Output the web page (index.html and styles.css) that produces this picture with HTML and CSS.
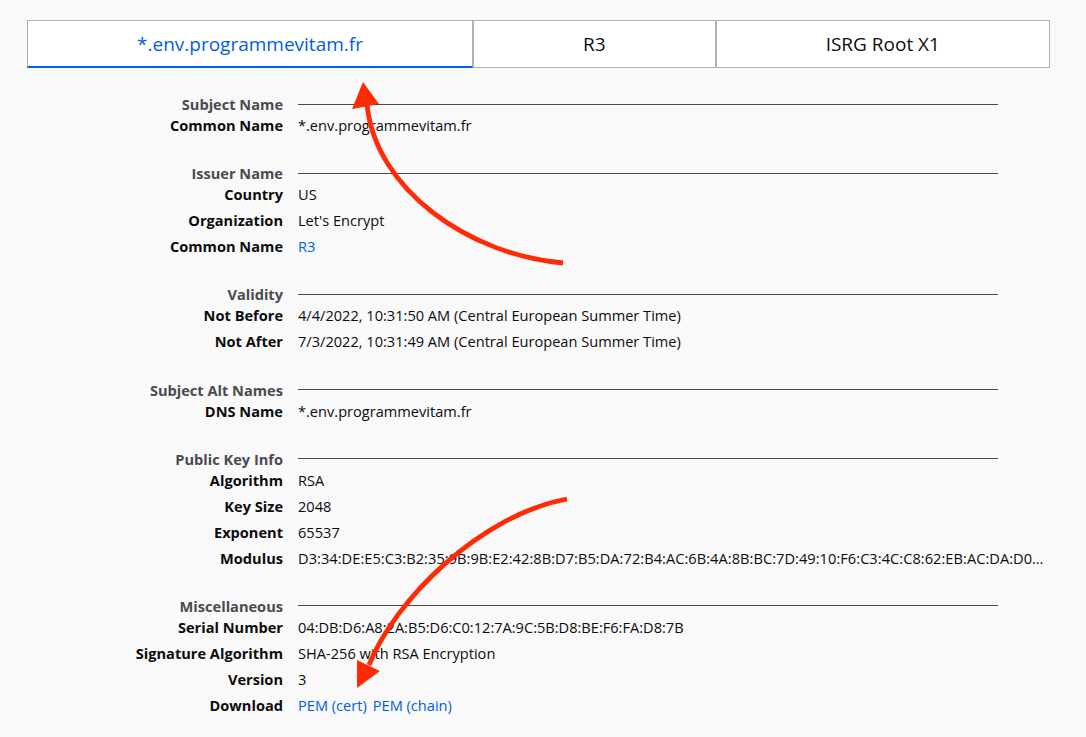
FILE: index.html
```html
<!DOCTYPE html>
<html lang="en">
<head>
<meta charset="utf-8">
<title>Certificate</title>
<link rel="stylesheet" href="styles.css">
</head>
<body>
<div class="page">
  <nav class="tabs">
    <div class="tab active">*.env.programmevitam.fr</div>
    <div class="tab">R3</div>
    <div class="tab">ISRG Root X1</div>
  </nav>

  <main class="info">
    <section class="sec">
      <div class="head"><span class="htitle">Subject Name</span><span class="hline"></span></div>
      <div class="row"><span class="lbl">Common Name</span><span class="val">*.env.programmevitam.fr</span></div>
    </section>

    <section class="sec">
      <div class="head"><span class="htitle">Issuer Name</span><span class="hline"></span></div>
      <div class="row"><span class="lbl">Country</span><span class="val">US</span></div>
      <div class="row"><span class="lbl">Organization</span><span class="val">Let's Encrypt</span></div>
      <div class="row"><span class="lbl">Common Name</span><span class="val"><a class="link" href="#">R3</a></span></div>
    </section>

    <section class="sec">
      <div class="head"><span class="htitle">Validity</span><span class="hline"></span></div>
      <div class="row"><span class="lbl">Not Before</span><span class="val">4/4/2022, 10:31:50 AM (Central European Summer Time)</span></div>
      <div class="row"><span class="lbl">Not After</span><span class="val">7/3/2022, 10:31:49 AM (Central European Summer Time)</span></div>
    </section>

    <section class="sec">
      <div class="head"><span class="htitle">Subject Alt Names</span><span class="hline"></span></div>
      <div class="row"><span class="lbl">DNS Name</span><span class="val">*.env.programmevitam.fr</span></div>
    </section>

    <section class="sec">
      <div class="head"><span class="htitle">Public Key Info</span><span class="hline"></span></div>
      <div class="row"><span class="lbl">Algorithm</span><span class="val">RSA</span></div>
      <div class="row"><span class="lbl">Key Size</span><span class="val">2048</span></div>
      <div class="row"><span class="lbl">Exponent</span><span class="val">65537</span></div>
      <div class="row"><span class="lbl">Modulus</span><span class="val mod">D3:34:DE:E5:C3:B2:35:9B:9B:E2:42:8B:D7:B5:DA:72:B4:AC:6B:4A:8B:BC:7D:49:10:F6:C3:4C:C8:62:EB:AC:DA:D0…</span></div>
    </section>

    <section class="sec">
      <div class="head"><span class="htitle">Miscellaneous</span><span class="hline"></span></div>
      <div class="row"><span class="lbl">Serial Number</span><span class="val">04:DB:D6:A8:2A:B5:D6:C0:12:7A:9C:5B:D8:BE:F6:FA:D8:7B</span></div>
      <div class="row"><span class="lbl">Signature Algorithm</span><span class="val">SHA-256 with RSA Encryption</span></div>
      <div class="row"><span class="lbl">Version</span><span class="val">3</span></div>
      <div class="row"><span class="lbl">Download</span><span class="val links"><a class="link" href="#">PEM (cert)</a><a class="link" href="#">PEM (chain)</a></span></div>
    </section>
  </main>

  <svg class="arrows" width="1086" height="737" viewBox="0 0 1086 737" aria-hidden="true">
    <path d="M563 263 C470 255 375 190 367 104" fill="none" stroke="#ff2b06" stroke-width="4.8" stroke-linecap="butt"/>
    <polygon points="363,82 352,109 379,104" fill="#ff2b06"/>
    <path d="M567 499 C480 515 395 600 369 665" fill="none" stroke="#ff2b06" stroke-width="4.8" stroke-linecap="butt"/>
    <polygon points="357,688 357,660 380,671" fill="#ff2b06"/>
  </svg>
</div>
</body>
</html>
```

FILE: styles.css
```css
html, body {
  margin: 0;
  padding: 0;
  background: #f9f9fa;
}

body {
  font-family: "Open Sans", "Noto Sans", "DejaVu Sans", sans-serif;
  font-size: 14.6px;
  color: #0c0c0d;
}

.page {
  position: relative;
  width: 1086px;
  height: 737px;
  overflow: hidden;
  box-sizing: border-box;
  padding: 20px 36px 0 27px;
}

.tabs {
  display: flex;
  height: 48px;
}

.tab {
  flex: 1 1 auto;
  box-sizing: border-box;
  height: 48px;
  display: flex;
  align-items: center;
  justify-content: center;
  background: #fff;
  border: 1px solid #b1b1b3;
  font-size: 19px;
  color: #0c0c0d;
  white-space: nowrap;
}

.tab.active {
  color: #0060df;
  border-bottom: 2px solid #0060df;
}

.info {
  margin-top: 28px;
}

.sec {
  display: grid;
  grid-template-columns: 256px minmax(0, 1fr);
  column-gap: 15px;
}

.sec + .sec {
  margin-top: 27.2px;
}

.head {
  display: contents;
}

.htitle {
  text-align: right;
  font-weight: 700;
  color: #4a4a4f;
  line-height: 16px;
  height: 16px;
  white-space: nowrap;
}

.hline {
  align-self: center;
  height: 0;
  border-top: 1px solid #4a4a4f;
  margin-right: 52px;
}

.row {
  display: contents;
}

.lbl {
  text-align: right;
  font-weight: 700;
  color: #0c0c0d;
  line-height: 26px;
  white-space: nowrap;
}

.val {
  line-height: 26px;
  white-space: nowrap;
  color: #0c0c0d;
}

.mod {
  letter-spacing: 0.05px;
}

.links {
  display: flex;
  gap: 6px;
}

.link {
  color: #0060df;
  text-decoration: none;
}

.arrows {
  position: absolute;
  top: 0;
  left: 0;
  pointer-events: none;
}
```
